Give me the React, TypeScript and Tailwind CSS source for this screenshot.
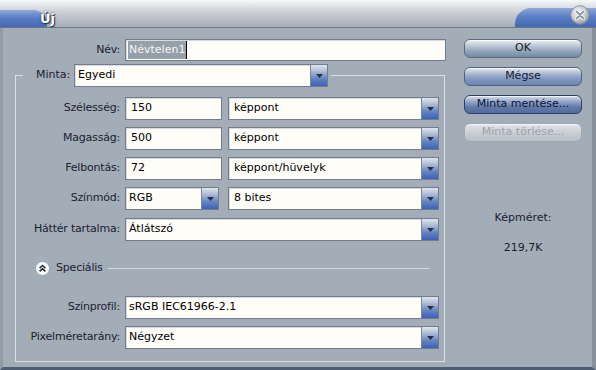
import React from "react";

// Photoshop "Új" (new document) dialog, XP silver look

const label = "text-right text-[#1b2030] whitespace-nowrap tracking-[-0.2px]";

function DropArrow() {
  return (
    <div className="w-[17px] h-full shrink-0 flex items-center justify-center border-l border-[#7b8694] bg-[linear-gradient(to_bottom,#dfe5ed_0%,#aebcd3_30%,#6483c4_65%,#3d62b4_100%)]">
      <svg width="7" height="4" viewBox="0 0 7 4">
        <path d="M0 0h7L3.5 4z" fill="#27303f" />
      </svg>
    </div>
  );
}

function Select({ value, className, pad = "pl-[3px]" }: { value: string; className: string; pad?: string }) {
  return (
    <div className={`flex h-[23px] bg-[#fffdf8] border border-[#727d89] shadow-[inset_1px_1px_0_#d7dbe0] ${className}`}>
      <div className={`flex-1 flex items-center text-black whitespace-nowrap overflow-hidden ${pad}`}>{value}</div>
      <DropArrow />
    </div>
  );
}

function Field({ value }: { value: string }) {
  return (
    <div className="w-[97px] h-[23px] flex items-center pl-[5px] bg-[#fffdf8] border border-[#727d89] shadow-[inset_1px_1px_0_#d7dbe0] text-black">
      {value}
    </div>
  );
}

function Row({ name, children, className = "" }: { name: string; children: React.ReactNode; className?: string }) {
  return (
    <div className={`flex items-center h-[23px] ${className}`}>
      <div className={`w-[104px] ${label}`}>{name}</div>
      <div className="ml-[5px] flex items-center">{children}</div>
    </div>
  );
}

function DialogButton({ text, kind }: { text: string; kind: "ok" | "cancel" | "save" | "off" }) {
  const styles = {
    ok: "border-[#5a6a80] text-[#111826] bg-[linear-gradient(to_bottom,#eef1f5_0%,#bcc7d4_35%,#93a4ba_65%,#7589a5_100%)]",
    cancel: "border-[#4f6384] text-[#101a33] bg-[linear-gradient(to_bottom,#e6ebf3_0%,#aab8d1_35%,#8197bf_65%,#6d84b0_100%)]",
    save: "border-[#2e3f62] text-[#0b1634] bg-[linear-gradient(to_bottom,#d6deeb_0%,#91a3c6_35%,#627aaa_65%,#536c9d_100%)]",
    off: "border-[#9ea7b2] text-[#9aa3ad] bg-[linear-gradient(to_bottom,#e3e6ea_0%,#cbd0d6_45%,#b9c0c8_100%)]",
  }[kind];
  return (
    <div className={`w-[118px] h-[19px] rounded-[6px] border flex items-center justify-center shadow-[inset_0_1px_0_rgba(255,255,255,0.7)] ${styles}`}>
      {text}
    </div>
  );
}

export default function App() {
  return (
    <div className="w-[596px] h-[370px] flex flex-col bg-[#a3adb7] font-['DejaVu_Sans',sans-serif] text-[11px] overflow-hidden">
      {/* title bar */}
      <div className="h-[28px] shrink-0 flex items-end border-b border-[#6c7784] bg-[linear-gradient(to_bottom,#f8f9fa_0%,#e1e4e8_20%,#c4c9cf_55%,#a7aeb6_100%)]">
        <div className="w-[47px] h-[17px] rounded-tr-[14px] flex items-center bg-[linear-gradient(to_bottom,#8ea8d8_0%,#5b7ec4_45%,#4368b4_100%)]">
          <span className="pl-[40px] text-[13px] font-bold text-white [text-shadow:0_0_2px_#1e2c4c,1px_1px_1px_#1e2c4c]">
            Új
          </span>
        </div>
        <div className="flex-1" />
        <div className="w-[81px] h-[19px] rounded-tl-[16px] flex justify-end pr-[6px] bg-[linear-gradient(to_bottom,#8ea8d8_0%,#5b7ec4_45%,#4368b4_100%)]">
          <svg width="20" height="20" viewBox="0 0 20 20" className="-mt-[3px]">
            <defs>
              <radialGradient id="cb" cx="40%" cy="35%" r="70%">
                <stop offset="0%" stopColor="#f4f5f7" />
                <stop offset="60%" stopColor="#c3c8cf" />
                <stop offset="100%" stopColor="#8a929c" />
              </radialGradient>
            </defs>
            <circle cx="10" cy="10" r="9.3" fill="url(#cb)" stroke="#7b848f" strokeWidth="0.8" />
            <path d="M6.5 6.5l7 7M13.5 6.5l-7 7" stroke="#ffffff" strokeWidth="3.2" strokeLinecap="round" />
            <path d="M6.5 6.5l7 7M13.5 6.5l-7 7" stroke="#8d959f" strokeWidth="1.8" strokeLinecap="round" />
          </svg>
        </div>
      </div>

      {/* body */}
      <div className="flex-1 flex border-l-[3px] border-l-[#929ca7] border-r-[4px] border-r-[#87919c] border-b-[3px] border-b-[#4f5d74]">
        <div className="w-[447px] shrink-0">
          <div className="mt-[11px] flex items-center h-[22px]">
            <div className={`w-[117px] ${label}`}>Név:</div>
            <div className="ml-[5px] w-[321px] h-[22px] flex items-center pl-[2px] bg-[#fffdf8] border border-[#727d89] shadow-[inset_1px_1px_0_#d7dbe0]">
              <span className="h-[18px] flex items-center px-[1px] bg-[#96a0ab] text-[#f6f6f6] border-r border-black">Névtelen1</span>
            </div>
          </div>

          <fieldset className="mt-[3px] ml-[12px] w-[430px] border border-[#dbe0e5] min-w-0">
            <legend className="ml-[7px] pl-[13px] pr-[3px]">
              <div className="flex items-center">
                <div className="w-[38px] text-[#1b2030]">Minta:</div>
                <Select value="Egyedi" className="w-[254px]" />
              </div>
            </legend>

            <div className="pt-[10px] pb-[12px] flex flex-col gap-[7px]">
              <Row name="Szélesség:">
                <Field value="150" />
                <Select value="képpont" className="ml-[6px] w-[211px]" pad="pl-[5px]" />
              </Row>
              <Row name="Magasság:">
                <Field value="500" />
                <Select value="képpont" className="ml-[6px] w-[211px]" pad="pl-[5px]" />
              </Row>
              <Row name="Felbontás:">
                <Field value="72" />
                <Select value="képpont/hüvelyk" className="ml-[6px] w-[211px]" pad="pl-[5px]" />
              </Row>
              <Row name="Színmód:">
                <Select value="RGB" className="w-[94px]" />
                <Select value="8 bites" className="ml-[9px] w-[211px]" pad="pl-[5px]" />
              </Row>
              <Row name="Háttér tartalma:" className="mt-[1px]">
                <Select value="Átlátszó" className="w-[314px]" />
              </Row>

              <div className="mt-[12px] h-[16px] flex items-center pl-[19px]">
                <svg width="15" height="15" viewBox="0 0 15 15">
                  <circle cx="7.5" cy="7.5" r="7" fill="#fbfcfd" stroke="#8e98a3" strokeWidth="0.8" />
                  <path d="M4.6 7.2l2.9-2.7 2.9 2.7M4.6 10.4l2.9-2.7 2.9 2.7" fill="none" stroke="#1f2633" strokeWidth="1.5" />
                </svg>
                <span className="ml-[6px] text-[#1b2030] tracking-[-0.2px]">Speciális</span>
                <div className="ml-[5px] w-[322px] h-px bg-[#d2d8de]" />
              </div>

              <Row name="Színprofil:" className="mt-[13px]">
                <Select value="sRGB IEC61966-2.1" className="w-[314px]" />
              </Row>
              <Row name="Pixelméretarány:">
                <Select value="Négyzet" className="w-[314px]" />
              </Row>
            </div>
          </fieldset>
        </div>

        <div className="pl-[14px] pt-[11px] flex flex-col">
          <div className="flex flex-col gap-[9px]">
            <DialogButton text="OK" kind="ok" />
            <DialogButton text="Mégse" kind="cancel" />
            <DialogButton text="Minta mentése..." kind="save" />
            <DialogButton text="Minta törlése..." kind="off" />
          </div>
          <div className="mt-[68px] w-[118px] text-center text-[#1b2030]">Képméret:</div>
          <div className="mt-[13px] w-[118px] text-center text-[#1b2030]">219,7K</div>
        </div>
      </div>
    </div>
  );
}
